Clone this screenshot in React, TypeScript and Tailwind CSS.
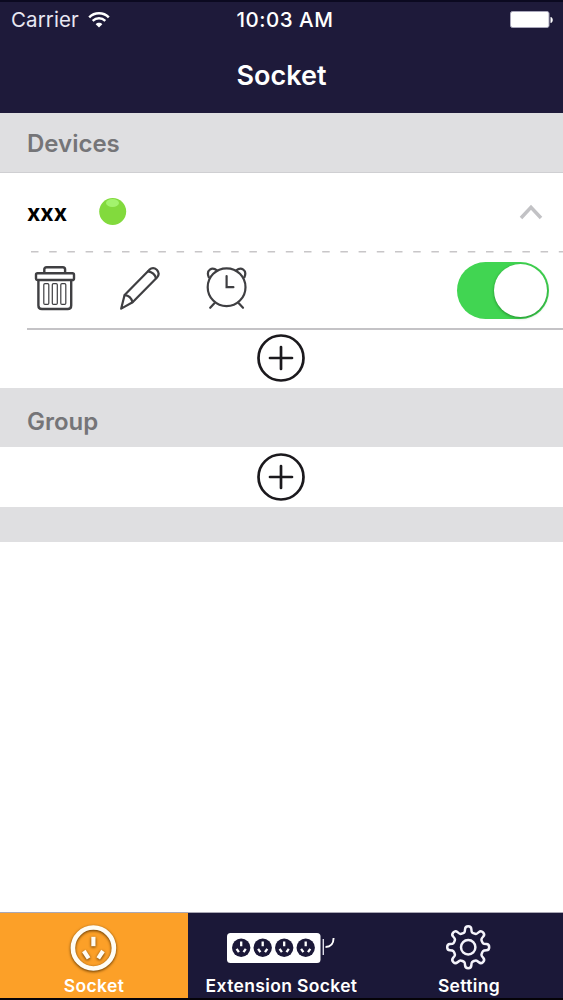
import { useState } from "react";
import type { ReactNode } from "react";

type TabId = "socket" | "extension" | "setting";

function WifiIcon() {
  return (
    <svg width="22" height="16" viewBox="0 0 22 16" fill="none" stroke="#fff">
      <path d="M1.2 5.3 C6.6 0 15.4 0 20.8 5.3" strokeWidth="2.5" />
      <path d="M4.7 8.8 C8.3 5.4 13.7 5.4 17.3 8.8" strokeWidth="2.4" />
      <path d="M11 15.6 L7.7 12.2 C9.6 10.3 12.4 10.3 14.3 12.2 Z" fill="#fff" stroke="none" />
    </svg>
  );
}

function BatteryIcon() {
  return (
    <svg width="44" height="18" viewBox="0 0 44 18">
      <rect x="0.5" y="0.5" width="38.5" height="16" rx="2" fill="#fff" stroke="#a9a7bb" />
      <path d="M40.5 6 C43.5 6.4 43.5 11.6 40.5 12 Z" fill="#fff" />
    </svg>
  );
}

function TrashIcon() {
  return (
    <svg width="42" height="46" viewBox="0 0 42 46" fill="none" stroke="#3f3f42" strokeWidth="2.4" strokeLinejoin="round">
      <path d="M10.3 7.5 V4.5 Q10.3 2.2 12.6 2.2 H28.8 Q31.1 2.2 31.1 4.5 V7.5" />
      <rect x="2" y="8.2" width="38" height="6.8" rx="1.6" />
      <path d="M4.4 15.5 V40.5 Q4.4 44 7.9 44 H33.7 Q37.2 44 37.2 40.5 V15.5" />
      <g strokeWidth="1.2">
        <rect x="9.8" y="18.6" width="5" height="20.8" rx="1.2" />
        <rect x="18.3" y="18.6" width="5" height="20.8" rx="1.2" />
        <rect x="26.8" y="18.6" width="5" height="20.8" rx="1.2" />
      </g>
    </svg>
  );
}

function PencilIcon() {
  return (
    <svg width="42" height="46" viewBox="0 0 42 46" fill="none" stroke="#3f3f42" strokeWidth="2.2" strokeLinejoin="round" strokeLinecap="round">
      <path d="M2.2 43.6 L5.6 30 L30.2 4.9 Q34 1.3 37.8 4.7 Q41.4 8.6 38 12.5 L13.6 37.3 Z" />
      <path d="M5.8 30.2 Q11.8 30.8 13.4 37.1" />
      <path d="M29.2 6.4 Q35.4 7.4 37 13.2" />
    </svg>
  );
}

function AlarmIcon() {
  return (
    <svg width="42" height="46" viewBox="0 0 42 46" fill="none" stroke="#3f3f42" strokeWidth="2.2" strokeLinecap="round">
      <circle cx="20.6" cy="22.2" r="18.9" />
      <path d="M2.8 12.2 C-0.3 5 6.1 1.4 11 5.4" />
      <path d="M38.4 12.2 C41.5 5 35.1 1.4 30.2 5.4" />
      <path d="M8.4 38.2 L4.2 42.8" />
      <path d="M32.8 38.2 L37 42.8" />
      <path d="M20.6 11 V22.2 H27.4" />
    </svg>
  );
}

function PlusCircleIcon() {
  return (
    <svg width="50" height="50" viewBox="0 0 50 50" fill="none" stroke="#1b191d" strokeWidth="2.7" strokeLinecap="round">
      <circle cx="25" cy="25" r="22.5" />
      <path d="M25 14 V36 M14 25 H36" />
    </svg>
  );
}

function SocketIcon() {
  return (
    <svg width="54" height="54" viewBox="0 0 54 54" fill="none" stroke="#fffdf5" className="drop-shadow-[0_1px_1.5px_#5c3300]">
      <circle cx="26.4" cy="27" r="20.5" strokeWidth="4.6" />
      <g strokeWidth="4.2">
        <path d="M26.4 15.8 V25.2" />
        <path d="M16.8 30 L21.6 37.4" />
        <path d="M36 30 L31.2 37.4" />
      </g>
    </svg>
  );
}

function ExtensionIcon() {
  return (
    <svg width="108" height="32" viewBox="0 0 108 32">
      <rect x="0" y="1" width="93.5" height="30" rx="3.5" fill="#fff" />
      {[14.2, 35.7, 57.2, 78.7].map((cx) => (
        <g key={cx}>
          <circle cx={cx} cy="15.7" r="9.2" fill="#1b1838" />
          <path
            d={`M${cx} 9.6 v4.6 M${cx - 4.6} 16.8 l2.3 3.4 M${cx + 4.6} 16.8 l-2.3 3.4`}
            stroke="#fff"
            strokeWidth="2.3"
            fill="none"
          />
        </g>
      ))}
      <path d="M96.3 7 V23" stroke="#dddce8" strokeWidth="1.4" />
      <path d="M98.5 15 Q106.4 15 106.6 6" stroke="#fff" strokeWidth="1.9" fill="none" />
    </svg>
  );
}

// Outline of an eight tooth gear, corners softened by running curves between edge midpoints
function gearPath(c: number) {
  const pts: [number, number][] = [];
  for (let i = 0; i < 8; i++) {
    for (const [offset, r] of [[-17, 15], [-12, 15.8], [-8, 21.2], [8, 21.2], [12, 15.8], [17, 15]]) {
      const a = ((i * 45 + offset) * Math.PI) / 180;
      pts.push([c + r * Math.sin(a), c - r * Math.cos(a)]);
    }
  }
  const mid = (i: number) => {
    const p = pts[i % pts.length];
    const q = pts[(i + 1) % pts.length];
    return `${((p[0] + q[0]) / 2).toFixed(2)} ${((p[1] + q[1]) / 2).toFixed(2)}`;
  };
  const last = mid(pts.length - 1);
  return `M${last} ` + pts.map((p, i) => `Q${p[0].toFixed(2)} ${p[1].toFixed(2)} ${mid(i)}`).join(" ") + "Z";
}

function GearIcon() {
  return (
    <svg width="48" height="48" viewBox="0 0 48 48" fill="none" stroke="#f4f3fa" strokeWidth="2.5">
      <path d={gearPath(23.2)} />
      <circle cx="23.2" cy="23.2" r="7.2" />
    </svg>
  );
}

function SectionHeader({ title, className }: { title: string; className: string }) {
  return (
    <div className={`flex h-[59px] items-center bg-[#dfdfe1] px-[27px] text-[24px] font-semibold leading-none text-[#757578] ${className}`}>
      {title}
    </div>
  );
}

const tabs: { id: TabId; label: string; width: string; icon: ReactNode }[] = [
  { id: "socket", label: "Socket", width: "w-[188px]", icon: <SocketIcon /> },
  { id: "extension", label: "Extension Socket", width: "w-[187px]", icon: <ExtensionIcon /> },
  { id: "setting", label: "Setting", width: "w-[188px]", icon: <GearIcon /> },
];

export default function App() {
  const [activeTab, setActiveTab] = useState<TabId>("socket");
  const [on, setOn] = useState(true);

  return (
    <div className="flex h-[1000px] w-[563px] flex-col overflow-hidden bg-white font-['Inter','Liberation_Sans',sans-serif]">
      <header className="h-[113px] border-t-2 border-[#0b0920] bg-[#1e1a3a] text-white">
        <div className="grid h-9 grid-cols-3 items-center pl-[11px] pr-[9px] text-[20.5px] leading-none">
          <div className="flex items-center gap-[9px] text-[#e9e8f3]">
            <span className="tracking-[0.1px]">Carrier</span>
            <WifiIcon />
          </div>
          <span className="whitespace-nowrap pl-[5px] text-center font-medium tracking-[0.5px]">
            10:03 AM
          </span>
          <div className="flex justify-end">
            <BatteryIcon />
          </div>
        </div>
        <h1 className="pt-[24px] text-center text-[27px] font-semibold leading-none">
          Socket
        </h1>
      </header>

      {/* Devices */}
      <div className="border-b border-[#cfcfd2]">
        <SectionHeader title="Devices" className="pt-[3px]" />
      </div>
      <div className="flex h-[78px] items-center pl-[27px] pr-[20px]">
        <span className="w-[72px] pt-[2px] text-[23px] font-bold leading-none text-black">
          xxx
        </span>
        <svg width="28" height="28" viewBox="0 0 28 28">
          <circle cx="13.7" cy="13.5" r="13.5" fill="#82da3d" />
          <ellipse cx="13.5" cy="5" rx="6.5" ry="4" fill="#a2f36d" />
        </svg>
        <svg className="ml-auto" width="24" height="16" viewBox="0 0 24 16" fill="none">
          <path d="M2 14 L12 3.4 L22 14" stroke="#c2c2c5" strokeWidth="3.5" />
        </svg>
      </div>
      <svg width="563" height="2" className="shrink-0">
        <path d="M31 0.6 H563" stroke="#c8c6c8" strokeWidth="1.6" strokeDasharray="7.5 10.7" />
      </svg>
      <div className="ml-[27px] flex h-[77px] items-center border-b-2 border-[#c4c3c6] pl-[7px] pr-[14px]">
        <button className="-mt-[5px]"><TrashIcon /></button>
        <button className="-mt-[5px] ml-[43px]"><PencilIcon /></button>
        <button className="-mt-[5px] ml-[45px]"><AlarmIcon /></button>
        <button
          role="switch"
          aria-checked={on}
          onClick={() => setOn(!on)}
          className={`ml-auto flex h-[57px] w-[92px] items-center rounded-full px-[2px] ${on ? "justify-end bg-[#41d552]" : "justify-start bg-gray-300"}`}
        >
          <span className="size-[53px] rounded-full bg-white shadow-[0_1px_3px_rgba(0,70,10,0.5)]" />
        </button>
      </div>
      <button className="flex h-[58px] shrink-0 items-center justify-center pb-[2px] pr-px">
        <PlusCircleIcon />
      </button>

      {/* Groups */}
      <SectionHeader title="Group" className="pt-[9px]" />
      <button className="flex h-[60px] shrink-0 items-center justify-center pr-px">
        <PlusCircleIcon />
      </button>
      <div className="h-[35px] bg-[#dfdfe1]" />

      <nav className="mt-auto flex h-[88px] border-b-2 border-t border-b-[#050308] border-t-[#aaa8b5] bg-[#1b1838]">
        {tabs.map((tab) => (
          <button
            key={tab.id}
            onClick={() => setActiveTab(tab.id)}
            className={`flex flex-col items-center text-white ${tab.width} ${activeTab === tab.id ? "bg-[#fca028]" : ""}`}
          >
            <span className="flex h-[63px] items-center justify-center pr-px pt-[6px]">
              {tab.icon}
            </span>
            <span className="whitespace-nowrap text-[17.5px] font-semibold leading-[20px] tracking-[0.35px]">
              {tab.label}
            </span>
          </button>
        ))}
      </nav>
    </div>
  );
}
